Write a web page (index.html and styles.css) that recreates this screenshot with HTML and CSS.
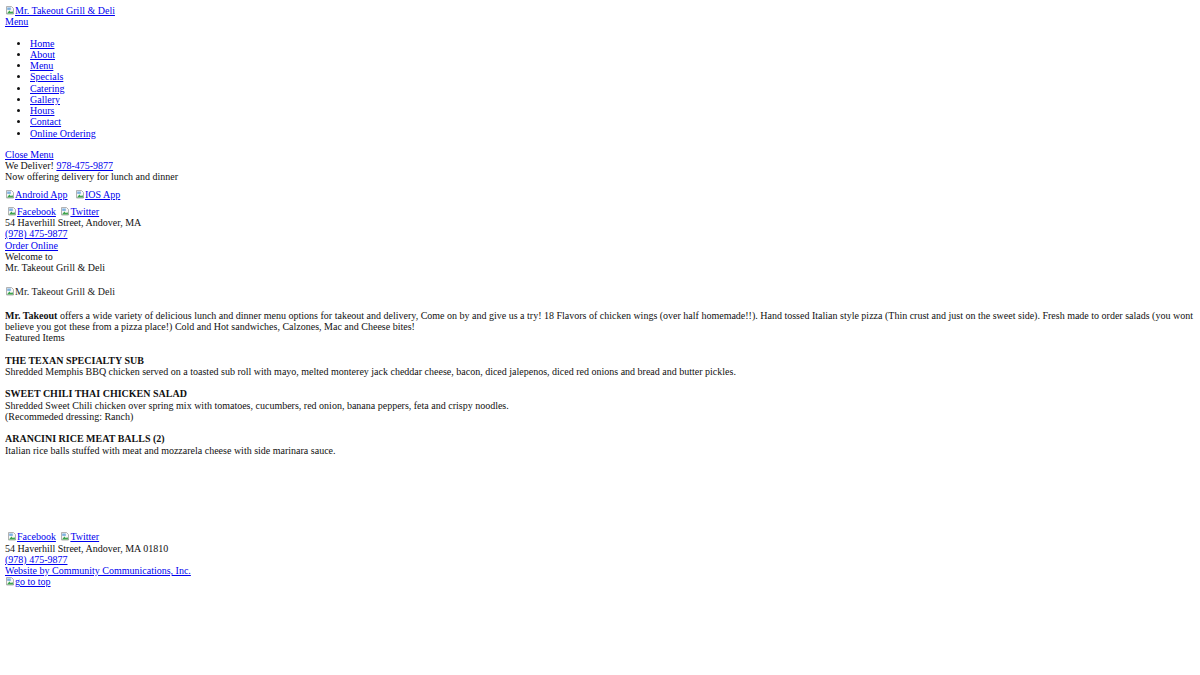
FILE: index.html
```
<!DOCTYPE html>
<html>
<head>
<meta charset="utf-8">
<title>Mr. Takeout Grill &amp; Deli</title>
<link rel="stylesheet" href="styles.css">
</head>
<body>
<header class="header">
  <div><a href="#" class="img-alt"><svg class="bi" viewBox="0 0 10 10"><path d="M1.5 1.5h5l2 2v5.5h-7z" fill="#f6f6f6" stroke="#a0a0a0" stroke-width="0.8"/><path d="M2 8.5l2.4-3 1.6 1.7 1.2-1.1 1.3 2.4z" fill="#3ca44a"/><rect x="2.2" y="2.5" width="3.6" height="2.4" fill="#7fb2e0"/></svg>Mr. Takeout Grill &amp; Deli</a></div>
  <div><a href="#">Menu</a></div>
  <nav>
    <ul class="nav-list">
      <li><a href="#">Home</a></li>
      <li><a href="#">About</a></li>
      <li><a href="#">Menu</a></li>
      <li><a href="#">Specials</a></li>
      <li><a href="#">Catering</a></li>
      <li><a href="#">Gallery</a></li>
      <li><a href="#">Hours</a></li>
      <li><a href="#">Contact</a></li>
      <li><a href="#">Online Ordering</a></li>
    </ul>
  </nav>
  <div><a href="#">Close Menu</a></div>
  <div>We Deliver! <a href="#">978-475-9877</a></div>
  <div>Now offering delivery for lunch and dinner</div>
  <div class="apps">
    <a href="#" class="img-alt gap-lg"><svg class="bi" viewBox="0 0 10 10"><path d="M1.5 1.5h5l2 2v5.5h-7z" fill="#f6f6f6" stroke="#a0a0a0" stroke-width="0.8"/><path d="M2 8.5l2.4-3 1.6 1.7 1.2-1.1 1.3 2.4z" fill="#3ca44a"/><rect x="2.2" y="2.5" width="3.6" height="2.4" fill="#7fb2e0"/></svg>Android App</a>
    <a href="#" class="img-alt"><svg class="bi" viewBox="0 0 10 10"><path d="M1.5 1.5h5l2 2v5.5h-7z" fill="#f6f6f6" stroke="#a0a0a0" stroke-width="0.8"/><path d="M2 8.5l2.4-3 1.6 1.7 1.2-1.1 1.3 2.4z" fill="#3ca44a"/><rect x="2.2" y="2.5" width="3.6" height="2.4" fill="#7fb2e0"/></svg>IOS App</a>
  </div>
  <div class="social">
    <a href="#" class="img-alt gap-sm"><svg class="bi" viewBox="0 0 10 10"><path d="M1.5 1.5h5l2 2v5.5h-7z" fill="#f6f6f6" stroke="#a0a0a0" stroke-width="0.8"/><path d="M2 8.5l2.4-3 1.6 1.7 1.2-1.1 1.3 2.4z" fill="#3ca44a"/><rect x="2.2" y="2.5" width="3.6" height="2.4" fill="#7fb2e0"/></svg>Facebook</a>
    <a href="#" class="img-alt"><svg class="bi" viewBox="0 0 10 10"><path d="M1.5 1.5h5l2 2v5.5h-7z" fill="#f6f6f6" stroke="#a0a0a0" stroke-width="0.8"/><path d="M2 8.5l2.4-3 1.6 1.7 1.2-1.1 1.3 2.4z" fill="#3ca44a"/><rect x="2.2" y="2.5" width="3.6" height="2.4" fill="#7fb2e0"/></svg>Twitter</a>
  </div>
  <div>54 Haverhill Street, Andover, MA</div>
  <div><a href="#">(978) 475-9877</a></div>
  <div><a href="#">Order Online</a></div>
  <div>Welcome to</div>
  <div>Mr. Takeout Grill &amp; Deli</div>
</header>
<main>
  <div class="hero img-alt plain"><svg class="bi" viewBox="0 0 10 10"><path d="M1.5 1.5h5l2 2v5.5h-7z" fill="#f6f6f6" stroke="#a0a0a0" stroke-width="0.8"/><path d="M2 8.5l2.4-3 1.6 1.7 1.2-1.1 1.3 2.4z" fill="#3ca44a"/><rect x="2.2" y="2.5" width="3.6" height="2.4" fill="#7fb2e0"/></svg>Mr. Takeout Grill &amp; Deli</div>
  <p class="intro"><b>Mr. Takeout</b> offers a wide variety of delicious lunch and dinner menu options for takeout and delivery, Come on by and give us a try! 18 Flavors of chicken wings (over half homemade!!). Hand tossed Italian style pizza (Thin crust and just on the sweet side). Fresh made to order salads (you wont believe you got these from a pizza place!) Cold and Hot sandwiches, Calzones, Mac and Cheese bites!</p>
  <div>Featured Items</div>
  <section class="item">
    <div class="item-title">THE TEXAN SPECIALTY SUB</div>
    <div>Shredded Memphis BBQ chicken served on a toasted sub roll with mayo, melted monterey jack cheddar cheese, bacon, diced jalepenos, diced red onions and bread and butter pickles.</div>
  </section>
  <section class="item">
    <div class="item-title">SWEET CHILI THAI CHICKEN SALAD</div>
    <div>Shredded Sweet Chili chicken over spring mix with tomatoes, cucumbers, red onion, banana peppers, feta and crispy noodles.</div>
    <div>(Recommeded dressing: Ranch)</div>
  </section>
  <section class="item">
    <div class="item-title">ARANCINI RICE MEAT BALLS (2)</div>
    <div>Italian rice balls stuffed with meat and mozzarela cheese with side marinara sauce.</div>
  </section>
</main>
<footer class="footer">
  <div class="social">
    <a href="#" class="img-alt gap-sm"><svg class="bi" viewBox="0 0 10 10"><path d="M1.5 1.5h5l2 2v5.5h-7z" fill="#f6f6f6" stroke="#a0a0a0" stroke-width="0.8"/><path d="M2 8.5l2.4-3 1.6 1.7 1.2-1.1 1.3 2.4z" fill="#3ca44a"/><rect x="2.2" y="2.5" width="3.6" height="2.4" fill="#7fb2e0"/></svg>Facebook</a>
    <a href="#" class="img-alt"><svg class="bi" viewBox="0 0 10 10"><path d="M1.5 1.5h5l2 2v5.5h-7z" fill="#f6f6f6" stroke="#a0a0a0" stroke-width="0.8"/><path d="M2 8.5l2.4-3 1.6 1.7 1.2-1.1 1.3 2.4z" fill="#3ca44a"/><rect x="2.2" y="2.5" width="3.6" height="2.4" fill="#7fb2e0"/></svg>Twitter</a>
  </div>
  <div>54 Haverhill Street, Andover, MA 01810</div>
  <div><a href="#">(978) 475-9877</a></div>
  <div><a href="#">Website by Community Communications, Inc.</a></div>
  <div><a href="#" class="img-alt"><svg class="bi" viewBox="0 0 10 10"><path d="M1.5 1.5h5l2 2v5.5h-7z" fill="#f6f6f6" stroke="#a0a0a0" stroke-width="0.8"/><path d="M2 8.5l2.4-3 1.6 1.7 1.2-1.1 1.3 2.4z" fill="#3ca44a"/><rect x="2.2" y="2.5" width="3.6" height="2.4" fill="#7fb2e0"/></svg>go to top</a></div>
</footer>
</body>
</html>
```
FILE: styles.css
```
html, body {
  background: #fff;
}
body {
  margin: 5px;
  font-family: "Liberation Serif", "Times New Roman", serif;
  font-size: 10px;
  line-height: 11.25px;
  color: #111;
}
a {
  color: #0000ee;
  text-decoration: underline;
}
.nav-list {
  margin: 10px 0;
  padding-left: 25px;
  list-style: disc;
}
.img-alt {
  white-space: nowrap;
}
.bi {
  width: 10px;
  height: 10px;
  vertical-align: -1px;
}
.apps {
  margin-top: 6px;
}
.gap-lg {
  margin-right: 5px;
}
.gap-sm {
  margin-right: 2px;
}
.social {
  margin-top: 6px;
  padding-left: 2px;
}
.hero {
  margin-top: 12.5px;
  height: 11.25px;
  color: #222;
}
.intro {
  margin: 12.5px 0 0;
}
.item {
  margin-top: 11.25px;
}
.item-title {
  font-weight: bold;
}
.footer {
  margin-top: 75.5px;
}
```
